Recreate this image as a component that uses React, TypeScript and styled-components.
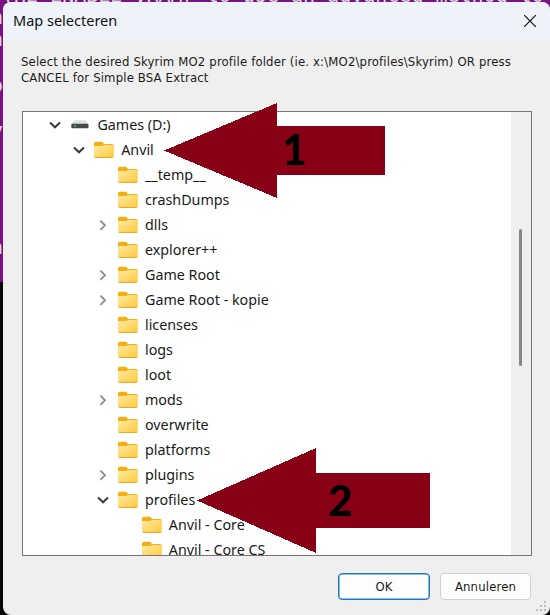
import React from "react";
import styled, { createGlobalStyle } from "styled-components";

const Global = createGlobalStyle`
  * { box-sizing: border-box; }
  body { margin: 0; background: #000; overflow: hidden; }
`;
const Desktop = styled.div`
  position: relative;
  width: 550px;
  height: 615px;
  padding: 2px 0 0 3px;
  overflow: hidden;
  background: linear-gradient(#7a1286 0 282px, #060606 282px);
`;
const ConsoleText = styled.div<{ $x: number; $y: number }>`
  position: absolute;
  left: ${(p) => p.$x}px;
  top: ${(p) => p.$y}px;
  font: 400 20px/24px "DejaVu Sans Mono", monospace;
  color: #dfd8de;
  white-space: pre;
`;
const Dialog = styled.div`
  position: relative;
  width: 547px;
  height: 613px;
  display: flex;
  flex-direction: column;
  border-radius: 8px;
  overflow: hidden;
  background: #efefef;
`;
const TitleBar = styled.header`
  height: 38px;
  flex: none;
  display: flex;
  align-items: center;
  justify-content: space-between;
  padding: 0 14px 0 10px;
  background: #eef3f9;
`;
const Title = styled.h1`
  margin: 0;
  padding-bottom: 2px;
  font: 400 14.5px/20px "Noto Sans", sans-serif;
  color: #111;
`;
const Message = styled.p`
  margin: 0;
  height: 71px;
  padding: 14px 0 0 18px;
  font: 400 13px/16px "DejaVu Sans Condensed", "DejaVu Sans", sans-serif;
  font-stretch: condensed;
  letter-spacing: 0.15px;
  color: #1c1c1c;
  white-space: pre;
`;
const TreeFrame = styled.div`
  flex: none;
  width: 510px;
  height: 445px;
  margin-left: 19px;
  display: flex;
  border: 1px solid #767676;
  background: #fff;
  overflow: hidden;
`;
const Tree = styled.div`
  flex: 1;
`;
const Row = styled.div<{ $level: number }>`
  height: 25px;
  display: flex;
  align-items: center;
  padding-left: ${(p) => 24 + p.$level * 23.8}px;
  color: #1a1a1a;
`;
const Toggle = styled.span`
  width: 16px;
  height: 16px;
  margin-right: 7.4px;
  display: flex;
`;
const IconSlot = styled.span`
  width: 20px;
  display: flex;
  justify-content: center;
`;
const Label = styled.span`
  margin-left: 7px;
  font: 400 14.3px/20px "Noto Sans", sans-serif;
  white-space: pre;
`;
const ScrollTrack = styled.div`
  width: 20px;
  padding: 117px 0 0 8px;
  background: #efefef;
`;
const ScrollThumb = styled.div`
  width: 3px;
  height: 137px;
  border-radius: 2px;
  background: #868686;
`;
const Footer = styled.footer`
  display: flex;
  gap: 10px;
  padding: 17px 0 0 335px;
`;
const Button = styled.button<{ $primary?: boolean }>`
  width: ${(p) => (p.$primary ? 92 : 91)}px;
  height: 27px;
  padding: 0;
  border: 1px solid ${(p) => (p.$primary ? "#1979c4" : "#d0d0d0")};
  box-shadow: ${(p) => (p.$primary ? "inset 0 0 0 0.5px #1979c4" : "none")};
  border-radius: 4px;
  background: #fdfdfd;
  font: 400 13px/18px "DejaVu Sans Condensed", "DejaVu Sans", sans-serif;
  font-stretch: condensed;
  letter-spacing: 0.15px;
  color: #1a1a1a;
`;
const Grip = styled.svg`
  position: absolute;
  right: 2px;
  bottom: 2px;
`;
const ArrowMark = styled.div<{ $x: number; $y: number; $w: number; $h: number }>`
  position: absolute;
  left: ${(p) => p.$x}px;
  top: ${(p) => p.$y}px;
  width: ${(p) => p.$w}px;
  height: ${(p) => p.$h}px;
`;
const ArrowSvg = styled.svg`
  display: block;
`;
const ArrowNumber = styled.span<{ $x: number; $y: number }>`
  position: absolute;
  left: ${(p) => p.$x}px;
  top: ${(p) => p.$y}px;
  font: 900 42px/48px Lato, sans-serif;
  color: #000;
`;

const Folder = () => (
  <svg width="20" height="18" viewBox="0 0 20 18">
    <defs>
      <linearGradient id="folder" x1="0" y1="0" x2="1" y2="1">
        <stop offset="0" stopColor="#ffeaa6" />
        <stop offset="1" stopColor="#fdc939" />
      </linearGradient>
    </defs>
    <path d="M0 2.4Q0 .8 1.6 .8H7.6Q8.4 .8 9 1.6L10 3H18.3Q19.6 3 19.6 4.5V8H0Z" fill="#f3b014" />
    <path d="M0 6Q0 5 1 5H8.4L10 4H18.8Q19.8 4 19.8 5V15.3Q19.8 16.8 18.3 16.8H1.5Q0 16.8 0 15.3Z" fill="url(#folder)" />
    <path d="M1 16.4H18.8" stroke="#e2a526" strokeWidth="1" />
  </svg>
);
const Drive = () => (
  <svg width="18" height="9" viewBox="0 0 18 9">
    <path d="M3.5 0.3H14.5L17.5 4H.5Z" fill="#dce0e2" />
    <rect x=".3" y="3.7" width="17.2" height="4.6" rx="1" fill="#454748" />
    <rect x="3" y="5.3" width="2" height="1.5" fill="#35d34a" />
  </svg>
);
const Chevron = ({ open }: { open: boolean }) => (
  <svg width="16" height="16" viewBox="0 0 16 16" fill="none">
    {open ? (
      <path d="M3 5.6L8 10.2L13 5.6" stroke="#3c3c3c" strokeWidth="2.1" />
    ) : (
      <path d="M5.4 3.7L10 8.3L5.4 12.9" stroke="#8f8f8f" strokeWidth="1.9" />
    )}
  </svg>
);

type Node = { name: string; level: number; state?: "open" | "closed"; drive?: boolean };
const nodes: Node[] = [
  { name: "Games (D:)", level: 0, state: "open", drive: true },
  { name: "Anvil", level: 1, state: "open" },
  { name: "__temp__", level: 2 },
  { name: "crashDumps", level: 2 },
  { name: "dlls", level: 2, state: "closed" },
  { name: "explorer++", level: 2 },
  { name: "Game Root", level: 2, state: "closed" },
  { name: "Game Root - kopie", level: 2, state: "closed" },
  { name: "licenses", level: 2 },
  { name: "logs", level: 2 },
  { name: "loot", level: 2 },
  { name: "mods", level: 2, state: "closed" },
  { name: "overwrite", level: 2 },
  { name: "platforms", level: 2 },
  { name: "plugins", level: 2, state: "closed" },
  { name: "profiles", level: 2, state: "open" },
  { name: "Anvil - Core", level: 3 },
  { name: "Anvil - Core CS", level: 3 },
];

const edgeLetters: [string, number][] = [["n", 5], ["n", 27], ["o", 73], ["y", 118], ["n", 235]];

export default function App() {
  return (
    <Desktop>
      <Global />
      <ConsoleText $x={2} $y={-17}>{"THE ENABLE VRAMr to use an advanced method to"}</ConsoleText>
      {edgeLetters.map(([c, y]) => (
        <ConsoleText key={y} $x={-9} $y={y}>{c}</ConsoleText>
      ))}
      <Dialog>
        <TitleBar>
          <Title>Map selecteren</Title>
          <svg width="12" height="12" viewBox="0 0 12 12" stroke="#111" strokeWidth="1.2">
            <path d="M0 0L12 12M12 0L0 12" />
          </svg>
        </TitleBar>
        <Message>
          {"Select the desired Skyrim MO2 profile folder (ie. x:\\MO2\\profiles\\Skyrim) OR press\nCANCEL for Simple BSA Extract"}
        </Message>
        <TreeFrame>
          <Tree>
            {nodes.map((n) => (
              <Row key={n.name} $level={n.level}>
                <Toggle>{n.state && <Chevron open={n.state === "open"} />}</Toggle>
                <IconSlot>{n.drive ? <Drive /> : <Folder />}</IconSlot>
                <Label>{n.name}</Label>
              </Row>
            ))}
          </Tree>
          <ScrollTrack>
            <ScrollThumb />
          </ScrollTrack>
        </TreeFrame>
        <Footer>
          <Button $primary>OK</Button>
          <Button>Annuleren</Button>
        </Footer>
        <Grip width="12" height="12" viewBox="0 0 12 12" fill="#bdbdbd">
          <path d="M8 0h2v2h-2zM4 4h2v2h-2zM8 4h2v2h-2zM0 8h2v2h-2zM4 8h2v2h-2zM8 8h2v2h-2z" />
        </Grip>
      </Dialog>
      <ArrowMark $x={164} $y={103} $w={221} $h={95}>
        <ArrowSvg width="221" height="95" shapeRendering="crispEdges">
          <path d="M0 47.5L113 0V23H221V72H113V95Z" fill="#880015" />
        </ArrowSvg>
        <ArrowNumber $x={118} $y={22}>1</ArrowNumber>
      </ArrowMark>
      <ArrowMark $x={197} $y={448} $w={233} $h={105}>
        <ArrowSvg width="233" height="105" shapeRendering="crispEdges">
          <path d="M0 52.5L119 0V25H233V80H119V105Z" fill="#880015" />
        </ArrowSvg>
        <ArrowNumber $x={131} $y={28}>2</ArrowNumber>
      </ArrowMark>
    </Desktop>
  );
}
